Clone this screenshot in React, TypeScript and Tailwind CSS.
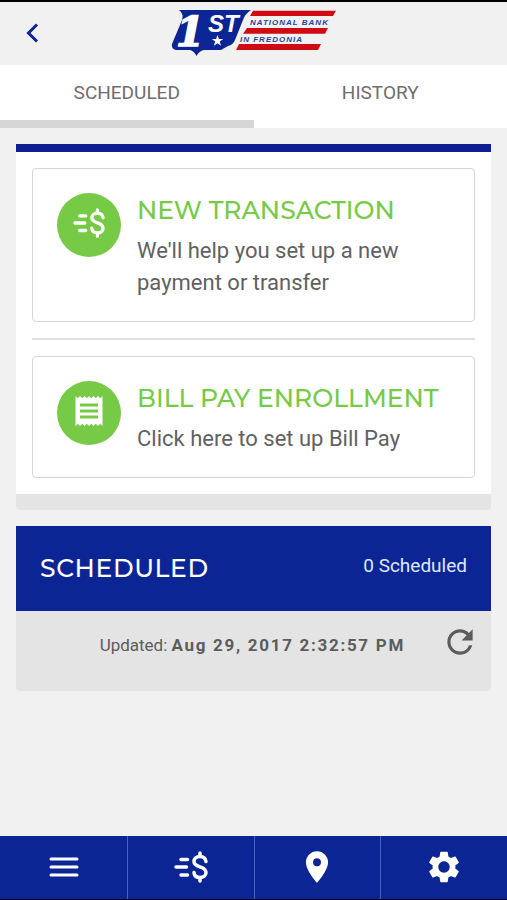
import type { ReactNode } from 'react';
import { MdPlace, MdReceipt, MdRefresh, MdSettings } from 'react-icons/md';

const HEADING = "font-['Montserrat','Inter',sans-serif] font-medium text-[25px]";

function BankLogo() {
  return (
    <svg className="overflow-visible" width="166" height="46" viewBox="0 0 166 46" role="img" aria-label="1st National Bank in Fredonia">
      {/* Shield */}
      <path
        d="M8 0H80Q74 4 72 10L64 30Q62 35 57 36L50 40H33Q28 41 25.500 46Q23 41 19 40H5Q0 39 1 34L11 10Q13 4 8 0Z"
        fill="#0c2594"
      />
      <text x="5" y="36" fontFamily="DejaVu Serif, serif" fontSize="41" fontWeight="700" fontStyle="italic" fill="#fff" stroke="#fff" strokeWidth="1.500">
        1
      </text>
      <text x="37" y="22" fontFamily="Liberation Sans, sans-serif" fontSize="24" fontWeight="700" fontStyle="italic" fill="#fff">
        ST
      </text>
      <path d="M46.500 25l1.400 4h4.300l-3.500 2.600 1.300 4.200-3.500-2.500-3.600 2.500 1.300-4.200-3.400-2.600h4.300z" fill="#fff" />

      {/* Stripes */}
      <path d="M82 0.700H165L162 6H79ZM76 18H157L154 23.700H72ZM68 34H150L147 40H65Z" fill="#d00a12" />
      <g fontFamily="Liberation Sans, sans-serif" fontSize="8" fontWeight="700" fontStyle="italic" letterSpacing="1" fill="#2c3e9e">
        <text x="79" y="15">NATIONAL BANK</text>
        <text x="69" y="32">IN FREDONIA</text>
      </g>
    </svg>
  );
}

function TransferIcon({ className }: { className: string }) {
  return (
    <svg className={className} viewBox="0 0 34 32" fill="none" stroke="currentColor" strokeWidth="3.500" strokeLinecap="round">
      <path d="M7 8.500h6.500M2 16h10.500M7 24h6.500" />
      <path d="M26 2v3M26 27v3" />
      <path d="M32 10.500C31.500 7 29 5.500 26 5.500c-3.500 0-6 2-6 5 0 3.200 2.500 4.200 6 5.300s6 2.500 6 5.700-2.500 5-6 5c-3 0-5.700-1.500-6-5" />
    </svg>
  );
}

function MenuIcon() {
  return (
    <svg width="30" height="20" viewBox="0 0 30 20" stroke="currentColor" strokeWidth="3" strokeLinecap="round">
      <path d="M2 2h26M2 10h26M2 18h26" />
    </svg>
  );
}

function ActionCard({ icon, title, children }: { icon: ReactNode; title: string; children: ReactNode }) {
  return (
    <button type="button" className="flex w-full items-start gap-4 rounded border border-[#d6d6d6] px-6 pt-6 pb-[22px] text-left">
      <span className="flex size-16 shrink-0 items-center justify-center rounded-full bg-[#76ca46] pb-1 text-white">{icon}</span>
      <span className="flex flex-col">
        <span className={`${HEADING} leading-[34px] text-[#76ca46]`}>{title}</span>
        <span className="mt-2 text-[22px] leading-8 text-[#616161]">{children}</span>
      </span>
    </button>
  );
}

function NavButton({ label, children }: { label: string; children: ReactNode }) {
  return (
    <button type="button" aria-label={label} className="flex items-center justify-center border-l border-[#4a5fb8] pb-0.5 text-white first:border-transparent">
      {children}
    </button>
  );
}

export default function App() {
  return (
    <div className="flex min-h-screen flex-col border-t-2 border-b border-black bg-[#f1f1f1] font-['Roboto',sans-serif]">
      <header className="grid h-[63px] grid-cols-[1fr_auto_1fr] items-center pb-0.5">
        <button type="button" aria-label="Back" className="ml-6 flex size-4 items-center justify-center">
          <svg width="16" height="20" viewBox="0 0 16 20" className="shrink-0" fill="none" stroke="#0c2594" strokeWidth="3">
            <path d="M13 1.500L4.500 10l8.500 8.500" />
          </svg>
        </button>
        <BankLogo />
      </header>

      <nav className="grid h-[63px] grid-cols-2 bg-white text-[19px] text-[#6e6e6e]">
        <button type="button" className="border-b-8 border-[#d6d6d6] pt-0.5">SCHEDULED</button>
        <button type="button" className="border-b-8 border-white pt-0.5">HISTORY</button>
      </nav>

      <main className="flex flex-col gap-4 p-4">
        <section className="rounded-b border-t-8 border-b-16 border-t-[#0f1e91] border-b-[#e4e4e4] bg-white p-4">
          <ActionCard icon={<TransferIcon className="h-[30px] w-8" />} title="NEW TRANSACTION">
            We'll help you set up a new payment or transfer
          </ActionCard>
          <hr className="my-4 border-t-2 border-[#e0e0e0]" />
          <ActionCard icon={<MdReceipt size={36} />} title="BILL PAY ENROLLMENT">
            Click here to set up Bill Pay
          </ActionCard>
        </section>

        <section className="overflow-hidden rounded-b bg-[#e4e4e4]">
          <div className="flex h-[85px] items-center justify-between bg-[#0c2594] px-6">
            <h2 className={`${HEADING} tracking-wide text-white`}>SCHEDULED</h2>
            <span className="pb-1 text-[19px] text-[#dfe8ff]">0 Scheduled</span>
          </div>
          <div className="flex items-center justify-end gap-9 px-3 pt-3 pb-[30px] text-[#5c5c5c]">
            <p className="pt-2 text-[17px]">
              Updated: <b className="tracking-widest">Aug 29, 2017 2:32:57 PM</b>
            </p>
            <button type="button" aria-label="Refresh">
              <MdRefresh size={38} />
            </button>
          </div>
        </section>
      </main>

      <nav className="mt-auto grid h-[63px] grid-cols-4 bg-[#0c2594]">
        <NavButton label="Menu"><MenuIcon /></NavButton>
        <NavButton label="Transfers"><TransferIcon className="h-8 w-9" /></NavButton>
        <NavButton label="Locations"><MdPlace size={38} /></NavButton>
        <NavButton label="Settings"><MdSettings size={38} /></NavButton>
      </nav>
    </div>
  );
}
